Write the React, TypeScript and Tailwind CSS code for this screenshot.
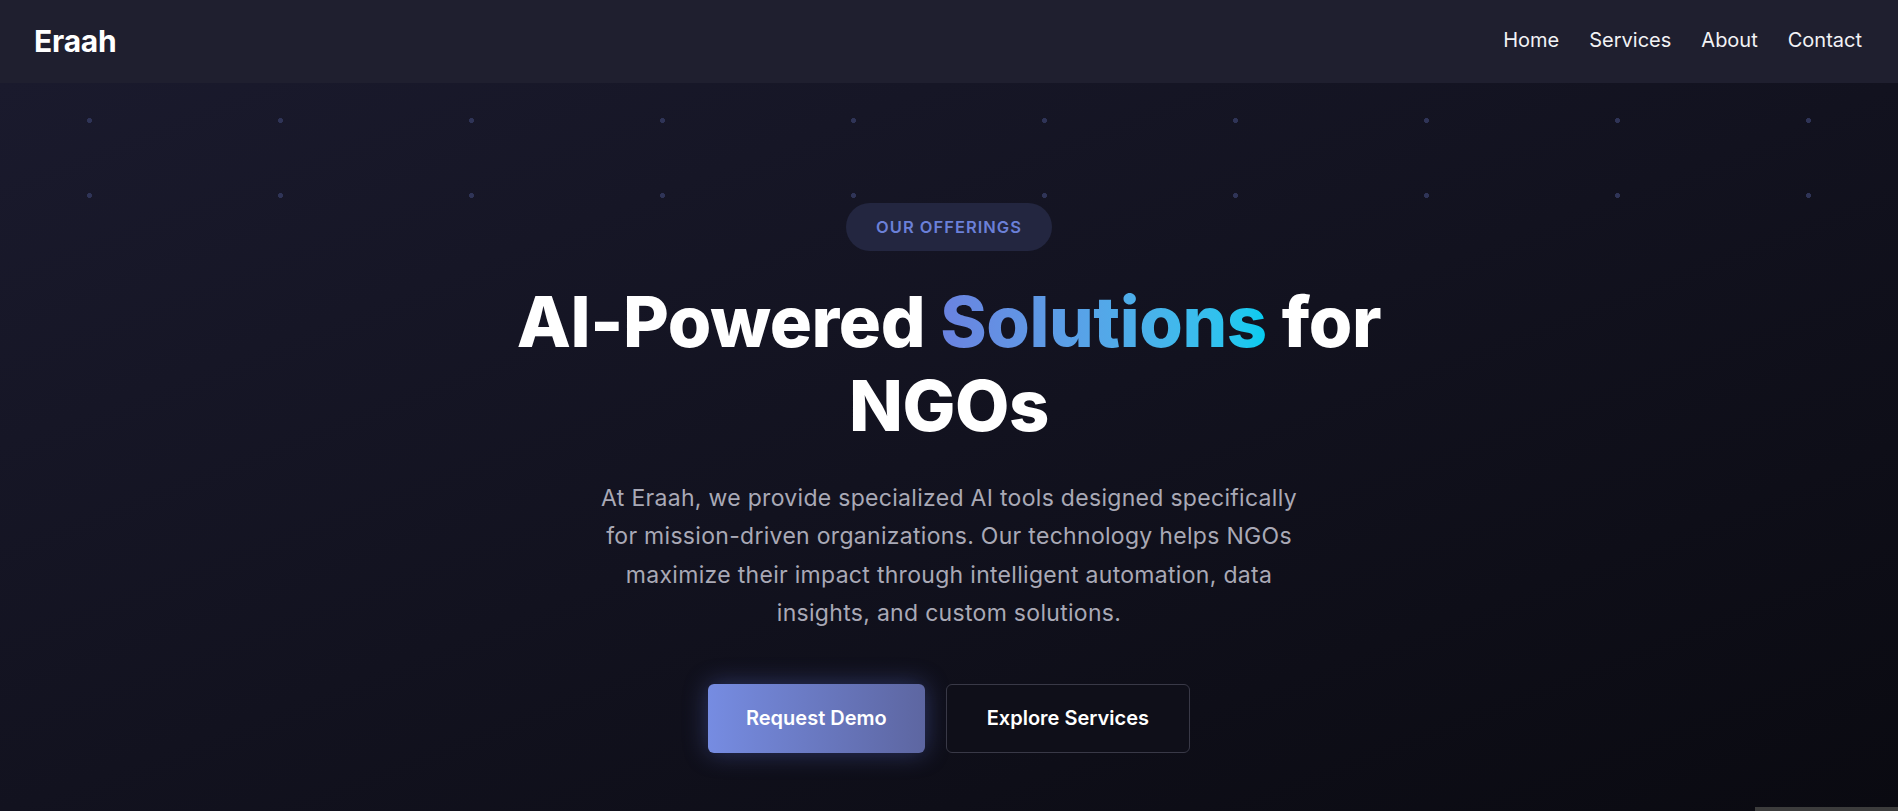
import React from 'react';

const NAV = ['Home', 'Services', 'About', 'Contact'];

const font = { fontFamily: 'Inter, "Noto Sans", sans-serif' };

export default function App() {
  return (
    <div className="relative h-[811px] overflow-hidden bg-[#0d0d16] text-white" style={font}>
      {/* Top bar */}
      <header className="relative z-10 flex h-[83px] items-center justify-between bg-[#1f1f2f] pl-[34px] pr-[36px]">
        <div className="text-[30px] font-bold tracking-[-0.2px] text-white">Eraah</div>
        <nav className="flex items-center gap-[30px] pb-[4px]">
          {NAV.map((item) => (
            <a key={item} href="#" className="text-[20px] font-normal text-[#f2f2f5]">
              {item}
            </a>
          ))}
        </nav>
      </header>

      {/* Hero */}
      <section className="relative h-[728px] bg-linear-to-br from-[#1a1a2d] via-[#12121f] to-[#0a0a11]">
        {/* dot pattern */}
        <div className="pointer-events-none absolute inset-x-0 top-0 h-[150px] bg-[radial-gradient(circle,#2f3457_2.2px,transparent_2.8px)] bg-[size:191px_75px] bg-[position:-6px_0px]" />

        <div className="relative flex flex-col items-center pt-[120px] text-center">
          <span className="flex h-[48px] items-center rounded-full bg-[#232640] px-[30px] text-[16.5px] font-semibold tracking-[1px] text-[#6b80d8]">
            OUR OFFERINGS
          </span>

          <h1 className="mt-[29px] max-w-[900px] text-[70.4px] font-extrabold leading-[1.2] tracking-[-0.4px] text-white">
            AI-Powered{' '}
            <span className="bg-linear-to-r from-[#6a82e0] to-[#00ccf0] bg-clip-text text-transparent">Solutions</span>{' '}
            for NGOs
          </h1>

          <p className="mt-[30px] max-w-[718px] text-[23px] leading-[38.4px] tracking-[0.3px] text-[#a9a9b6]">
            At Eraah, we provide specialized AI tools designed specifically for mission-driven organizations. Our
            technology helps NGOs maximize their impact through intelligent automation, data insights, and custom
            solutions.
          </p>

          <div className="mt-[51px] flex items-center gap-[21px]">
            <button className="h-[69px] rounded-md bg-linear-to-r from-[#768ce2] to-[#5d66a1] px-[38px] text-[20px] font-semibold text-white shadow-[0_0_24px_rgba(102,126,234,0.35)]">
              Request Demo
            </button>
            <button className="h-[69px] rounded-md border border-[#393947] bg-[#0f0f19] px-[40px] text-[20px] font-semibold text-white">
              Explore Services
            </button>
          </div>
        </div>
      </section>

      <div className="absolute bottom-0 right-0 h-[4px] w-[143px] bg-[#3c3c3c]" />
    </div>
  );
}
